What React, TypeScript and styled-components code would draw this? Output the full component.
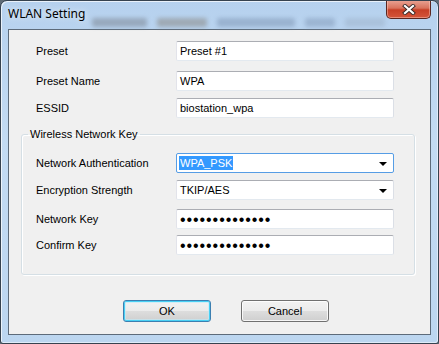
import React, { FC } from 'react';
import styled, { createGlobalStyle } from 'styled-components';

const GlobalStyle = createGlobalStyle`
    html, body {
        margin: 0;
        padding: 0;
        background: #5f6b76;
    }
    #root {
        width: 439px;
        height: 344px;
    }
`

const Window = styled.div`
    width: 439px;
    height: 344px;
    box-sizing: border-box;
    display: flex;
    flex-direction: column;
    padding: 0 7px 8px 7px;
    border: 1px solid #36424f;
    border-radius: 7px 7px 3px 3px;
    background: linear-gradient(to bottom, #b6d1ee 0%, #c3dbf3 40%, #bcd6f0 100%);
    box-shadow: inset 1px 1px 0 rgba(255, 255, 255, 0.7), inset -1px -1px 0 rgba(255, 255, 255, 0.5);
    overflow: hidden;
`

const TitleBar = styled.div`
    height: 28px;
    display: flex;
    align-items: stretch;
    flex-shrink: 0;
`

const Title = styled.div`
    font-family: 'Noto Sans', 'Open Sans', sans-serif;
    font-size: 12px;
    color: #000;
    padding-top: 5px;
    line-height: 16px;
    white-space: nowrap;
    text-shadow: 0 0 6px rgba(255, 255, 255, 0.9);
`

const Backdrop = styled.div`
    flex: 1;
    display: flex;
    align-items: flex-end;
    gap: 10px;
    padding: 0 0 2px 7px;
    filter: blur(2.2px);
    opacity: 0.55;
`

interface BlobProps {
    w: number;
    tone: string;
}

const Blob = styled.div<BlobProps>`
    width: ${({ w }) => w}px;
    height: 9px;
    background: ${({ tone }) => tone};
    border-radius: 2px;
`

const CloseButton = styled.div`
    width: 45px;
    height: 19px;
    margin-top: -1px;
    box-sizing: border-box;
    border: 1px solid #5b2620;
    border-top: none;
    border-radius: 0 0 5px 5px;
    background: linear-gradient(to bottom, #eaa596 0%, #d9735d 45%, #c73f26 55%, #d4553a 100%);
    box-shadow: inset 0 0 0 1px rgba(255, 210, 200, 0.45);
    display: flex;
    align-items: center;
    justify-content: center;
    align-self: flex-start;
`

const Client = styled.div`
    flex: 1;
    border: 1px solid #5d6b7a;
    background: #f0f0f0;
    display: flex;
    flex-direction: column;
    padding-top: 11px;
    font-family: 'Liberation Sans', Arial, sans-serif;
    font-size: 11px;
    color: #000;
`

const TopSection = styled.div`
    display: flex;
    flex-direction: column;
    padding-left: 27px;
`

interface RowProps {
    mt?: number;
}

const Row = styled.div<RowProps>`
    display: flex;
    align-items: center;
    height: 20px;
    margin-top: ${({ mt }) => mt || 0}px;
`

const Label = styled.div`
    width: 140px;
    white-space: nowrap;
`

interface FieldProps {
    focused?: boolean;
}

const Field = styled.div<FieldProps>`
    width: 218px;
    height: 20px;
    box-sizing: border-box;
    background: #fff;
    border: 1px solid;
    border-color: ${({ focused }) => focused ? '#569de5' : '#abadb3 #dbdfe6 #e3e9ef #e2e3ea'};
    border-radius: 2px;
    display: flex;
    align-items: center;
    padding: 0 3px;
    white-space: nowrap;
`

const FieldText = styled.span`
    flex: 1;
`

const Selected = styled.span`
    background: #3399ff;
    color: #fff;
    padding: 1px;
    margin-left: -1px;
`

const Arrow = styled.span`
    width: 0;
    height: 0;
    border-left: 4px solid transparent;
    border-right: 4px solid transparent;
    border-top: 4px solid #000;
    margin-right: 3px;
    margin-top: 1px;
`

const Dots = styled.span`
    font-family: 'Liberation Sans', Arial, sans-serif;
    font-size: 16px;
    letter-spacing: 0.92px;
    line-height: 16px;
    margin-top: 1px;
`

const Group = styled.fieldset`
    margin: 10px 15px 0 12px;
    padding: 12px 0 19px 14px;
    border: 1px solid #d5dfe5;
    border-radius: 3px;
    box-shadow: inset 1px 1px 0 #fff, 1px 1px 0 #fff;
    display: flex;
    flex-direction: column;
`

const Legend = styled.legend`
    padding: 0 2px;
    margin-left: -8px;
    line-height: 13px;
`

const ButtonRow = styled.div`
    display: flex;
    gap: 30px;
    padding-left: 114px;
    margin-top: 25px;
`

interface ButtonProps {
    primary?: boolean;
}

const Button = styled.div<ButtonProps>`
    width: 88px;
    height: 22px;
    box-sizing: border-box;
    border: 1px solid ${({ primary }) => primary ? '#3c7fb1' : '#707070'};
    border-radius: 3px;
    background: linear-gradient(to bottom, #f2f2f2 0%, #ebebeb 50%, #dddddd 51%, #cfcfcf 100%);
    box-shadow: ${({ primary }) => primary
        ? 'inset 0 0 0 1px #48d0f4, inset 0 0 0 2px rgba(190, 235, 250, 0.6)'
        : 'inset 0 0 0 1px rgba(255, 255, 255, 0.8)'};
    display: flex;
    align-items: center;
    justify-content: center;
`

const CloseIcon: FC = () => (
    <svg width="14" height="11" viewBox="0 0 14 11">
        <path d="M3 2 L11 9 M11 2 L3 9" stroke="#3b2a28" strokeWidth="4" strokeLinecap="square" />
        <path d="M3 2 L11 9 M11 2 L3 9" stroke="#ffffff" strokeWidth="2.2" strokeLinecap="square" />
    </svg>
)

const blobs = [
    { w: 55, tone: '#7d8794' },
    { w: 50, tone: '#8a8985' },
    { w: 78, tone: '#8098b6' },
    { w: 30, tone: '#859dbb' },
    { w: 40, tone: '#9fb4cc' },
];

const App: FC = () => {
    return (
        <>
            <GlobalStyle />
            <Window>
                <TitleBar>
                    <Title>WLAN Setting</Title>
                    <Backdrop>
                        {blobs.map((b, i) => <Blob key={i} w={b.w} tone={b.tone} />)}
                    </Backdrop>
                    <CloseButton>
                        <CloseIcon />
                    </CloseButton>
                </TitleBar>
                <Client>
                    <TopSection>
                        <Row>
                            <Label>Preset</Label>
                            <Field><FieldText>Preset #1</FieldText></Field>
                        </Row>
                        <Row mt={10}>
                            <Label>Preset Name</Label>
                            <Field><FieldText>WPA</FieldText></Field>
                        </Row>
                        <Row mt={7}>
                            <Label>ESSID</Label>
                            <Field><FieldText>biostation_wpa</FieldText></Field>
                        </Row>
                    </TopSection>
                    <Group>
                        <Legend>Wireless Network Key</Legend>
                        <Row>
                            <Label>Network Authentication</Label>
                            <Field focused>
                                <FieldText><Selected>WPA_PSK</Selected></FieldText>
                                <Arrow />
                            </Field>
                        </Row>
                        <Row mt={7}>
                            <Label>Encryption Strength</Label>
                            <Field>
                                <FieldText>TKIP/AES</FieldText>
                                <Arrow />
                            </Field>
                        </Row>
                        <Row mt={9}>
                            <Label>Network Key</Label>
                            <Field><Dots>••••••••••••••</Dots></Field>
                        </Row>
                        <Row mt={6}>
                            <Label>Confirm Key</Label>
                            <Field><Dots>••••••••••••••</Dots></Field>
                        </Row>
                    </Group>
                    <ButtonRow>
                        <Button primary>OK</Button>
                        <Button>Cancel</Button>
                    </ButtonRow>
                </Client>
            </Window>
        </>
    )
}

export default App;
